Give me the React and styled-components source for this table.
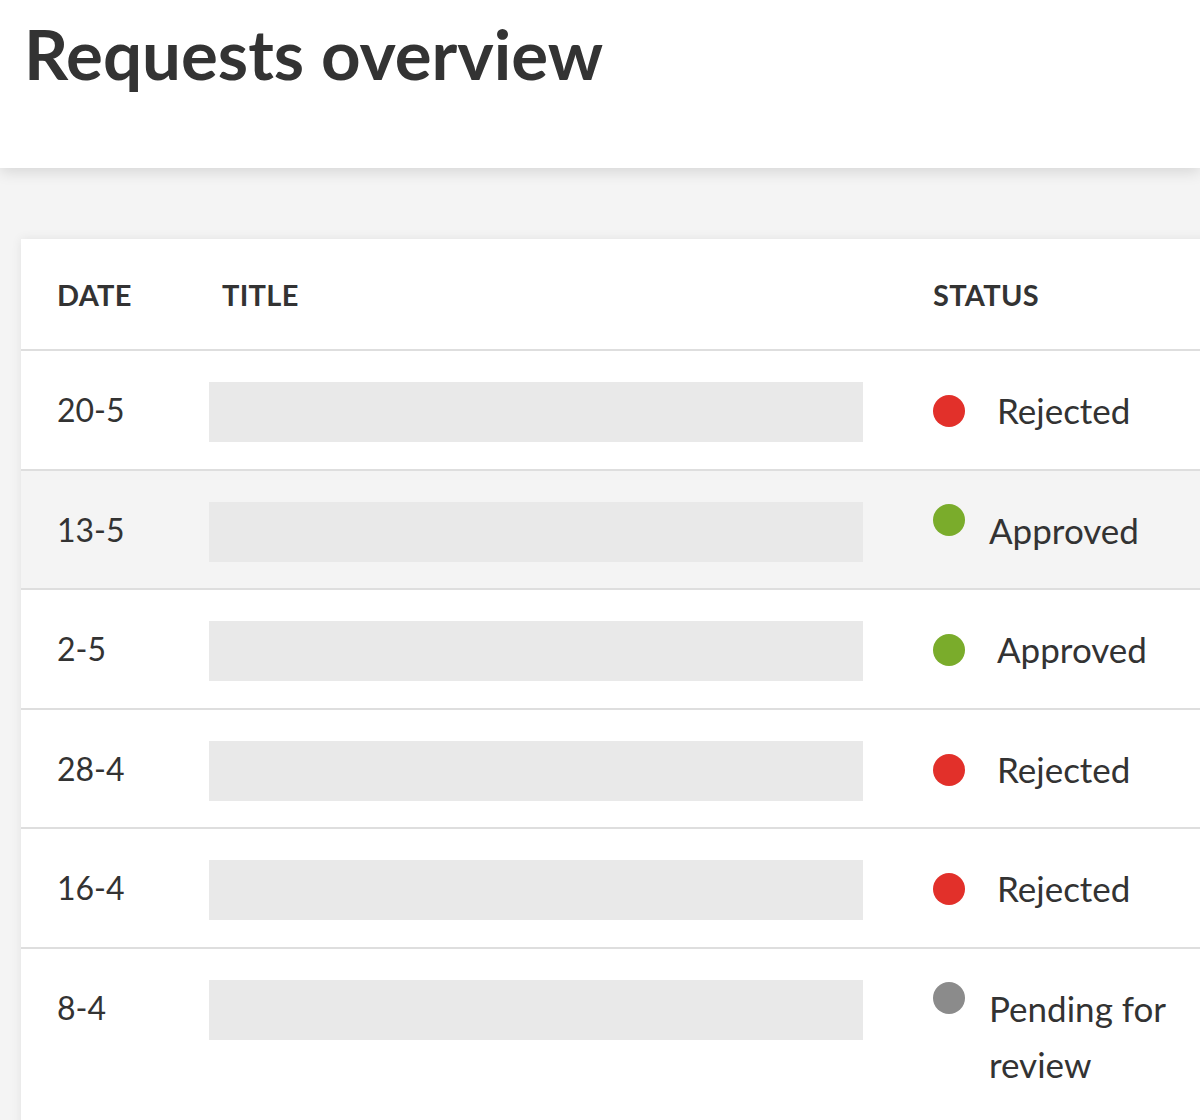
import React from 'react'
import styled, { createGlobalStyle } from 'styled-components'

const GlobalStyle = createGlobalStyle`
    body {
        margin: 0;
        background: #f4f4f4;
        font-family: Lato, "Open Sans", sans-serif;
        color: #333;
        overflow-x: hidden;
    }
`

const PageHeader = styled.header`
    background: #fff;
    height: 168px;
    box-sizing: border-box;
    padding: 14px 24px 0;
    box-shadow: 0 4px 14px rgba(0,0,0,0.12);
    position: relative;
`

const PageTitle = styled.h1`
    margin: 0;
    font-size: 69px;
    font-weight: 700;
    color: #333;
    line-height: 80px;
`

const Main = styled.main`
    padding: 71px 0 0 21px;
`

const Card = styled.div`
    background: #fff;
    width: calc(100% + 40px);
    box-shadow: 0 0 10px rgba(0,0,0,0.08);
`

const Row = styled.div`
    display: grid;
    grid-template-columns: 152px 654px 1fr;
    padding: ${p => p.$head ? '0' : '31px 0 26.5px'};
    padding-left: 36px;
    height: ${p => p.$head ? '110px' : 'auto'};
    align-items: ${p => p.$head ? 'center' : 'start'};
    background: ${p => p.$shade ? '#f4f4f4' : '#fff'};
    border-top: ${p => p.$head ? 'none' : '2px solid #dedede'};

    &:last-child {
        padding-bottom: 60px;
    }
`

const HeadCell = styled.div`
    font-size: 29px;
    font-weight: 700;
    letter-spacing: 0.3px;
    padding-left: ${p => p.$indent || 0}px;
`

const DateCell = styled.div`
    font-size: 32px;
    line-height: 56px;
`

const TitleBar = styled.div`
    height: 60px;
    background: #e9e9e9;
`

const StatusCell = styled.div`
    display: flex;
    align-items: ${p => p.$stacked ? 'flex-start' : 'center'};
    gap: ${p => p.$stacked ? '24px' : '32px'};
    min-height: 60px;
    padding-left: 70px;
`

const Dot = styled.span`
    flex: none;
    width: 32px;
    height: 32px;
    border-radius: 50%;
    background: ${p => p.$color};
    margin-top: ${p => p.$stacked ? '2px' : '-2px'};
`

const StatusText = styled.span`
    font-size: 35px;
    line-height: 56px;
    width: 190px;
    margin-top: ${p => p.$stacked ? '0' : '-4px'};
`

const colors = {
    Rejected: '#e2302a',
    Approved: '#7aac2b',
    'Pending for review': '#8b8b8b',
}

const requests = [
    { date: '20-5', status: 'Rejected' },
    { date: '13-5', status: 'Approved', shade: true, stacked: true },
    { date: '2-5', status: 'Approved' },
    { date: '28-4', status: 'Rejected' },
    { date: '16-4', status: 'Rejected' },
    { date: '8-4', status: 'Pending for review', stacked: true },
]

export default function App() {
    return (
        <>
            <GlobalStyle />
            <PageHeader>
                <PageTitle>Requests overview</PageTitle>
            </PageHeader>
            <Main>
                <Card>
                    <Row $head>
                        <HeadCell>DATE</HeadCell>
                        <HeadCell $indent={13}>TITLE</HeadCell>
                        <HeadCell $indent={70}>STATUS</HeadCell>
                    </Row>
                    {requests.map(r => (
                        <Row key={r.date} $shade={r.shade}>
                            <DateCell>{r.date}</DateCell>
                            <TitleBar />
                            <StatusCell $stacked={r.stacked}>
                                <Dot $color={colors[r.status]} $stacked={r.stacked} />
                                <StatusText $stacked={r.stacked}>{r.status}</StatusText>
                            </StatusCell>
                        </Row>
                    ))}
                </Card>
            </Main>
        </>
    )
}
